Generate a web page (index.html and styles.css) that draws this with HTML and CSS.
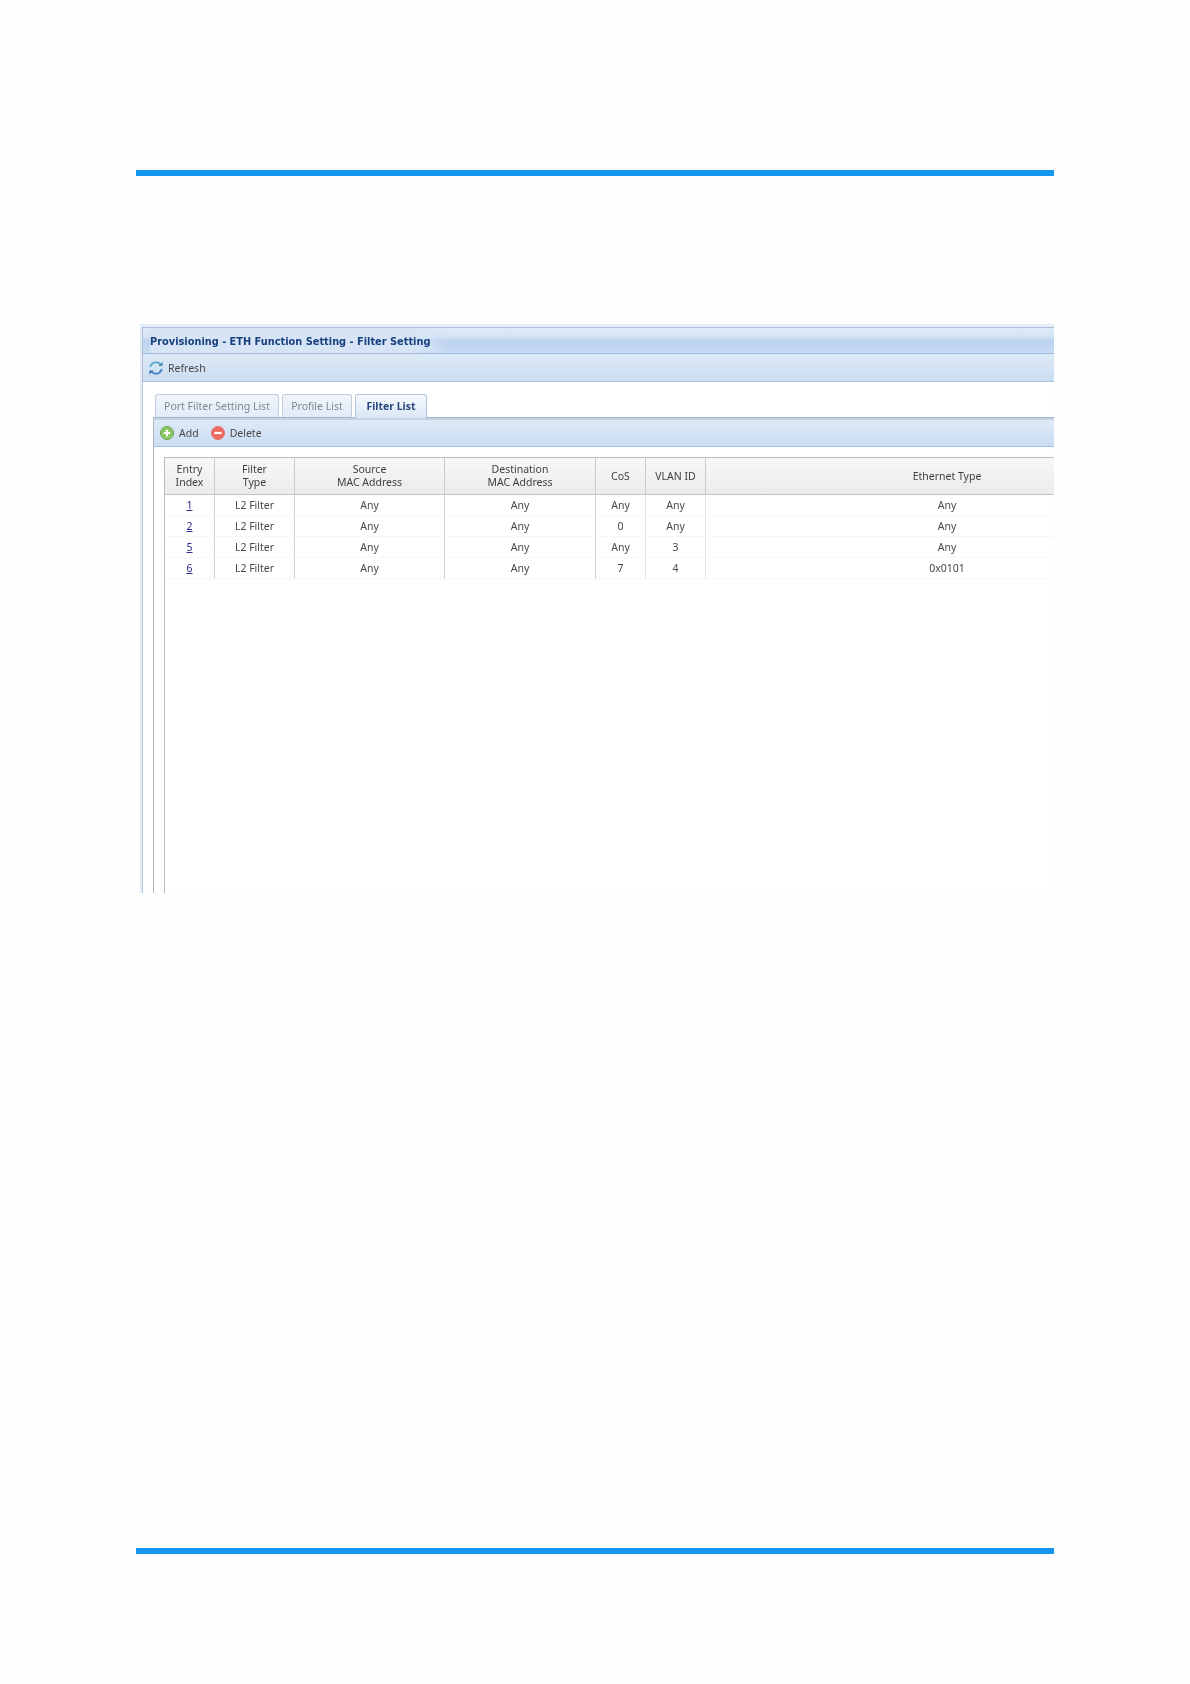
FILE: index.html
```html
<!DOCTYPE html>
<html lang="en">
<head>
<meta charset="utf-8">
<title>Filter Setting</title>
<link rel="stylesheet" href="styles.css">
</head>
<body>
<div class="page">
  <div class="rule"></div>
  <div class="shot">
    <div class="window">
      <div class="title"><span class="title-text">Provisioning - ETH Function Setting - Filter Setting</span></div>
      <div class="toolbar main-toolbar">
        <span class="tool">
          <svg class="icon" viewBox="0 0 16 16" width="16" height="16">
            <path d="M2.2 7C3 3.8 6 1.8 9 2.4c1.5.3 2.6 1 3.4 2.1" fill="none" stroke="#5aa6c8" stroke-width="1.8"/>
            <path d="M14.6 1.8v4.2h-4.2z" fill="#3d8fb8"/>
            <path d="M13.8 9c-.8 3.2-3.8 5.2-6.8 4.6-1.5-.3-2.6-1-3.4-2.1" fill="none" stroke="#3f7fc0" stroke-width="1.8"/>
            <path d="M1.4 14.6v-4.2h4.2z" fill="#3574b5"/>
          </svg>
          Refresh
        </span>
      </div>
      <div class="content">
        <div class="tabs">
          <span class="tab tab-port">Port Filter Setting List</span>
          <span class="tab tab-profile">Profile List</span>
          <span class="tab tab-filter">Filter List</span>
        </div>
        <div class="panel">
          <div class="toolbar sub-toolbar">
            <span class="tool tool-add">
              <svg class="icon" viewBox="0 0 14 14" width="14" height="14">
                <circle cx="7" cy="7" r="6.5" fill="#8cc666" stroke="#6aa548"/>
                <path d="M7 3.8v6.4M3.8 7h6.4" stroke="#fff" stroke-width="2"/>
              </svg>
              Add
            </span>
            <span class="tool tool-delete">
              <svg class="icon" viewBox="0 0 14 14" width="14" height="14">
                <circle cx="7" cy="7" r="6.5" fill="#ee6a62" stroke="#e0706a"/>
                <path d="M3.4 7h7.2" stroke="#fff" stroke-width="2.2"/>
              </svg>
              Delete
            </span>
          </div>
          <div class="table-area">
            <table class="grid">
              <colgroup>
                <col class="c-entry"><col class="c-type"><col class="c-mac"><col class="c-mac2"><col class="c-cos"><col class="c-vlan"><col class="c-eth">
              </colgroup>
              <thead>
                <tr>
                  <th>Entry<br>Index</th>
                  <th>Filter<br>Type</th>
                  <th>Source<br>MAC Address</th>
                  <th>Destination<br>MAC Address</th>
                  <th>CoS</th>
                  <th>VLAN ID</th>
                  <th>Ethernet Type</th>
                </tr>
              </thead>
              <tbody>
                <tr><td><a href="#">1</a></td><td>L2 Filter</td><td>Any</td><td>Any</td><td>Any</td><td>Any</td><td>Any</td></tr>
                <tr><td><a href="#">2</a></td><td>L2 Filter</td><td>Any</td><td>Any</td><td>0</td><td>Any</td><td>Any</td></tr>
                <tr><td><a href="#">5</a></td><td>L2 Filter</td><td>Any</td><td>Any</td><td>Any</td><td>3</td><td>Any</td></tr>
                <tr><td><a href="#">6</a></td><td>L2 Filter</td><td>Any</td><td>Any</td><td>7</td><td>4</td><td>0x0101</td></tr>
              </tbody>
            </table>
          </div>
        </div>
      </div>
    </div>
  </div>
  <div class="rule rule-bottom"></div>
</div>
</body>
</html>
```

FILE: styles.css
```css
html, body {
  margin: 0;
  padding: 0;
  background: #fefefe;
}

.page {
  width: 918px;
  margin-left: 136px;
  padding-top: 170px;
  font-family: "Noto Sans", "DejaVu Sans", sans-serif;
  font-size: 10.5px;
  color: #444;
}

.rule {
  height: 6px;
  background: #1496f0;
}

.rule-bottom {
  margin-top: 655px;
}

.shot {
  margin: 148px 0 0 4px;
  height: 569px;
  overflow: hidden;
  background: #fff;
  border-top: 3px solid #e6eef8;
  box-sizing: border-box;
  border-left: 2px solid #e2eaf6;
  filter: blur(0.35px);
}

.window {
  height: 100%;
  border-left: 1px solid #b4c4d8;
  box-sizing: border-box;
}

.title {
  height: 27px;
  box-sizing: border-box;
  border-top: 1px solid #a9bed8;
  border-bottom: 1px solid #9db6d6;
  background: linear-gradient(#dce9f7 0, #d6e5f6 32%, #bfd4f1 50%, #bfd4f0 72%, #cbddf3);
  padding-left: 7px;
  display: flex;
  align-items: stretch;
}

.title-text {
  font-family: "DejaVu Sans", sans-serif;
  font-weight: bold;
  font-size: 9.8px;
  line-height: 27px;
  color: #17407e;
  padding-right: 20px;
  background: linear-gradient(to right, #d6e4f6 88%, rgba(214, 228, 246, 0));
}

.toolbar {
  display: flex;
  align-items: center;
  background: linear-gradient(#dde9f7, #cbddf2);
  border-bottom: 1px solid #a4c0e2;
  box-sizing: border-box;
}

.main-toolbar {
  height: 28px;
  padding-left: 5px;
}

.tool {
  display: inline-flex;
  align-items: center;
  gap: 3px;
  color: #484848;
}

.main-toolbar .icon {
  margin-right: 1px;
}

.content {
  padding: 12px 0 0 10px;
}

.tabs {
  display: flex;
  height: 23px;
  padding-left: 2px;
  gap: 3px;
  align-items: flex-end;
}

.tab {
  box-sizing: border-box;
  height: 23px;
  line-height: 22px;
  text-align: center;
  border: 1px solid #bccde0;
  border-bottom: 0;
  border-radius: 3px 3px 0 0;
  background: linear-gradient(#f2f6fb, #e2ebf7);
  color: #7d8794;
}

.tab-port { width: 124px; }
.tab-profile { width: 70px; }

.tab-filter {
  width: 72px;
  height: 24px;
  margin-bottom: -1px;
  position: relative;
  z-index: 1;
  background: linear-gradient(#f6f9fd, #dae7f6);
  border-color: #aec3dc;
  color: #2a4a80;
  font-weight: bold;
}

.panel {
  border-top: 1px solid #a6b6c8;
  border-left: 1px solid #b0b8c4;
  height: 600px;
}

.sub-toolbar {
  height: 29px;
  padding-left: 6px;
  padding-bottom: 1px;
  border-top: 2px solid #c4d2e2;
}

.tool-add {
  gap: 5px;
  margin-right: 12px;
}

.tool-delete {
  gap: 5px;
}

.table-area {
  margin: 10px 0 0 10px;
  border-left: 1px solid #b8bcc2;
  height: 500px;
}

.grid {
  width: 1023px;
  table-layout: fixed;
  border-collapse: separate;
  border-spacing: 0;
  color: #484848;
}

.c-entry { width: 50px; }
.c-type { width: 80px; }
.c-mac { width: 150px; }
.c-mac2 { width: 151px; }
.c-cos { width: 50px; }
.c-vlan { width: 60px; }
.c-eth { width: 482px; }

.grid th {
  height: 38px;
  padding: 0;
  box-sizing: border-box;
  font-weight: normal;
  line-height: 13px;
  text-align: center;
  color: #404040;
  background: linear-gradient(#f8f8f8, #ebebeb);
  border-top: 1px solid #b5bcc4;
  border-bottom: 1px solid #c4c4c4;
  border-right: 1px solid #cacaca;
}

.grid td {
  height: 21px;
  padding: 0;
  box-sizing: border-box;
  text-align: center;
  line-height: 20px;
  border-bottom: 1px solid #f8f8f8;
  border-right: 1px solid #d0d0d0;
}

.grid td:nth-child(n+5) {
  border-right-color: #e4e4e4;
}

.grid td:last-child,
.grid th:last-child {
  border-right: 0;
}

.grid a {
  color: #2a2a8c;
  text-decoration: underline;
}
```
